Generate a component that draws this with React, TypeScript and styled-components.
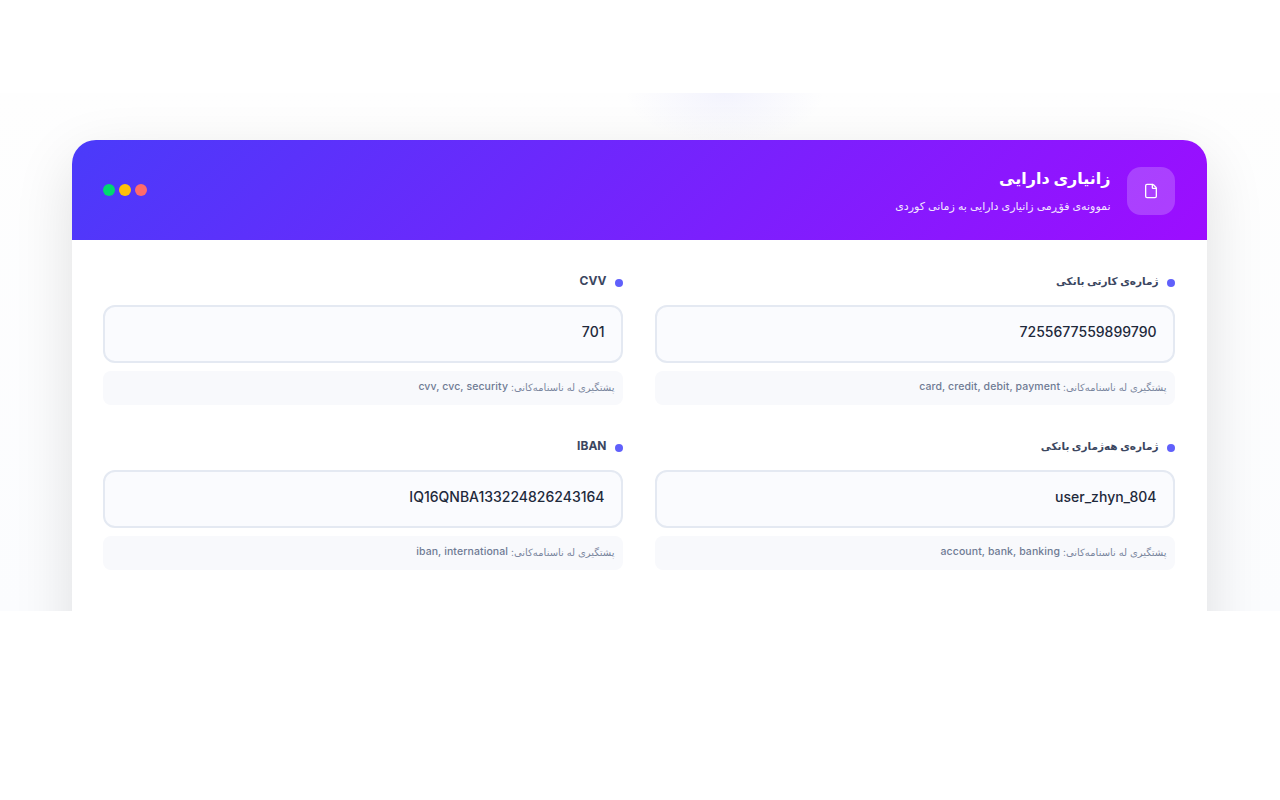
import { File } from 'lucide-react';
import styled, { createGlobalStyle } from 'styled-components';

const GlobalStyle = createGlobalStyle`
  html, body {
    margin: 0;
    padding: 0;
    background: #ffffff;
  }
  * {
    box-sizing: border-box;
  }
`;

const Page = styled.div`
  padding-top: 93px;
  font-family: Inter, "DejaVu Sans", sans-serif;
`;

const Stage = styled.section`
  height: 518px;
  overflow: hidden;
  padding: 47px 73.5px 0 71.5px;
  background:
    radial-gradient(ellipse 100px 50px at 725px 0, rgba(99, 102, 241, 0.07), transparent),
    linear-gradient(180deg, #fefefe 0%, #fbfcfe 100%);
`;

const Card = styled.div`
  direction: rtl;
  min-height: 620px;
  background: #ffffff;
  border-radius: 24px;
  overflow: hidden;
  box-shadow: 0 20px 60px rgba(0, 0, 0, 0.12);
`;

const Header = styled.header`
  height: 100px;
  padding: 0 32px 0 31px;
  display: flex;
  align-items: center;
  justify-content: space-between;
  background: linear-gradient(135deg, #4a3bfa 0%, #9d0dff 100%);
  color: #ffffff;
`;

const HeaderStart = styled.div`
  display: flex;
  align-items: center;
  gap: 16px;
`;

const IconBox = styled.div`
  width: 48px;
  height: 48px;
  margin-top: 2px;
  border-radius: 14px;
  display: flex;
  align-items: center;
  justify-content: center;
  background: rgba(255, 255, 255, 0.2);
`;

const Title = styled.h1`
  margin: 0 0 9px;
  font-size: 16px;
  line-height: 22px;
  font-weight: 700;
`;

const Subtitle = styled.p`
  margin: 0;
  font-size: 11px;
  line-height: 16px;
  opacity: 0.9;
`;

const Dots = styled.div`
  display: flex;
  gap: 4px;
`;

const Dot = styled.span<{ $color: string }>`
  width: 12px;
  height: 12px;
  border-radius: 50%;
  background: ${(p) => p.$color};
`;

const Body = styled.div`
  padding: 32px 32px 32px 31px;
  display: grid;
  grid-template-columns: 1fr 1fr;
  column-gap: 32px;
  row-gap: 32px;
`;

const Field = styled.div`
  display: flex;
  flex-direction: column;
`;

const Label = styled.label<{ $latin?: boolean }>`
  display: flex;
  align-items: center;
  gap: 8px;
  height: 20px;
  margin-bottom: 13px;
  padding-bottom: ${(p) => (p.$latin ? '3px' : '1px')};
  font-size: ${(p) => (p.$latin ? '12px' : '10.5px')};
  font-weight: 700;
  color: #3b4660;

  &::before {
    content: '';
    width: 8px;
    height: 8px;
    margin-top: ${(p) => (p.$latin ? '5px' : '3px')};
    border-radius: 50%;
    background: #6060fb;
  }
`;

const Input = styled.input`
  width: 100%;
  height: 58px;
  padding: 0 16px 5px;
  border: 2px solid #e4e9f2;
  border-radius: 12px;
  background: #fafbfe;
  color: #1e293b;
  font-family: inherit;
  font-size: 14px;
  font-weight: 500;
  outline: none;
`;

const Hint = styled.div`
  height: 34px;
  margin-top: 8px;
  padding: 0 8px 3px;
  display: flex;
  align-items: center;
  gap: 3px;
  border-radius: 8px;
  background: #f8f9fc;
  color: #7a869e;
  font-size: 10px;
`;

const HintTags = styled.span`
  font-size: 10.5px;
  font-weight: 500;
  letter-spacing: 0.1px;
  color: #6f7b94;
`;

const fields = [
  { label: 'ژمارەی کارتی بانکی', value: '7255677559899790', hint: 'card, credit, debit, payment' },
  { label: 'CVV', value: '701', hint: 'cvv, cvc, security', latin: true },
  { label: 'ژمارەی هەژماری بانکی', value: 'user_zhyn_804', hint: 'account, bank, banking' },
  { label: 'IBAN', value: 'IQ16QNBA133224826243164', hint: 'iban, international', latin: true },
];

export default function App() {
  return (
    <>
      <GlobalStyle />
      <Page>
        <Stage>
          <Card>
            <Header>
              <HeaderStart>
                <IconBox>
                  <File size={16} color="#ffffff" strokeWidth={2} />
                </IconBox>
                <div>
                  <Title>زانیاری دارایی</Title>
                  <Subtitle>نموونەی فۆڕمی زانیاری دارایی بە زمانی کوردی</Subtitle>
                </div>
              </HeaderStart>
              <Dots>
                <Dot $color="#ff6b6b" />
                <Dot $color="#ffc107" />
                <Dot $color="#00d96f" />
              </Dots>
            </Header>
            <Body>
              {fields.map((f) => (
                <Field key={f.label}>
                  <Label $latin={f.latin}>{f.label}</Label>
                  <Input readOnly value={f.value} />
                  <Hint>
                    <span>پشتگیری لە ناسنامەکانی:</span>
                    <HintTags>{f.hint}</HintTags>
                  </Hint>
                </Field>
              ))}
            </Body>
          </Card>
        </Stage>
      </Page>
    </>
  );
}
